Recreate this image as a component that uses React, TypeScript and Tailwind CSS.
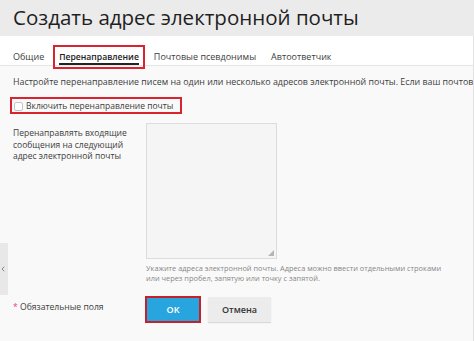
import { ChevronLeft } from 'lucide-react';

const tabs = ['Общие', 'Перенаправление', 'Почтовые псевдонимы', 'Автоответчик'];

export default function App() {
  return (
    <div className="w-[474px] h-[341px] overflow-hidden bg-[#f9f9f9] text-[#3d3d3d] font-['Open_Sans',sans-serif] relative">
      {/* ── Title band ─────────────────────────────── */}
      <div className="h-[36px] bg-[#ebebeb] pl-[13px] flex items-center">
        <h1 className="text-[20.5px] leading-none text-[#1f1f1f] whitespace-nowrap -mt-[2px]">
          Создать адрес электронной почты
        </h1>
      </div>

      {/* ── Tabs ───────────────────────────────────── */}
      <div className="h-[30px] bg-white border-b border-[#e6e6e6] flex items-end pl-[13px] gap-[15px] text-[9px] mr-[1px]">
        {tabs.map((t, i) =>
          i === 1 ? (
            <div key={t} className="relative h-full flex items-end">
              <span className="border-b-2 border-[#222] font-semibold text-[8.6px] text-[#222] leading-[12px] whitespace-nowrap">{t}</span>
              {/* red highlight */}
              <div className="absolute -left-[6px] -right-[6px] top-[9px] -bottom-[4px] border-2 border-[#d9232e]" />
            </div>
          ) : (
            <span key={t} className="pb-[2px] leading-[12px] whitespace-nowrap">{t}</span>
          )
        )}
      </div>

      {/* ── Body ───────────────────────────────────── */}
      <div className="pl-[13px] pt-[10px]">
        <p className="whitespace-nowrap text-[8.85px] leading-[12px]">
          Настройте перенаправление писем на один или несколько адресов электронной почты. Если ваш почтовый ящик
        </p>

        <div className="relative mt-[12px] flex items-center gap-[3px] h-[12px] text-[8.5px]">
          <span className="ml-[1px] w-[9px] h-[9px] border border-[#c4c4c4] rounded-[2px] bg-white" />
          <span className="leading-[12px] whitespace-nowrap">Включить перенаправление почты</span>
          <div className="absolute -left-[3px] -top-[3px] w-[172px] h-[17px] border-2 border-[#d9232e]" />
        </div>

        <div className="mt-[11px] grid grid-cols-[133px_1fr]">
          <div className="pt-[4px] pr-[6px] text-[8.5px] leading-[11.5px]">
            Перенаправлять входящие сообщения на следующий адрес электронной почты
          </div>
          <div>
            <div className="relative w-[131px] h-[136px] border border-[#dcdcdc] bg-[#f5f5f5]">
              <svg className="absolute right-[2px] bottom-[2px]" width="6" height="6" viewBox="0 0 6 6">
                <path d="M6 0 L6 6 L0 6 Z" fill="#b5b5b5" />
              </svg>
            </div>
            <p className="mt-[4px] text-[7.4px] leading-[10px] text-[#888] whitespace-nowrap">
              Укажите адреса электронной почты. Адреса можно ввести отдельными строками
              <br />
              или через пробел, запятую или точку с запятой.
            </p>
          </div>
        </div>

        <div className="mt-[14px] grid grid-cols-[133px_1fr] items-center">
          <div className="text-[8.6px] -mt-[4px]">
            <span className="text-[#e0457b]">*</span> Обязательные поля
          </div>
          <div className="flex gap-[8px]">
            <button className="relative w-[54px] h-[25px] bg-[#28a5de] text-white font-semibold text-[9px]">
              OK
              <span className="absolute -inset-[1px] border-2 border-[#c8202b]" />
            </button>
            <button className="w-[63px] h-[25px] bg-[#ececec] text-[#333] font-semibold text-[9px] shadow-[0_1px_1px_rgba(0,0,0,0.12)]">
              Отмена
            </button>
          </div>
        </div>
      </div>

      {/* ── Side collapse handle ───────────────────── */}
      <div className="absolute left-0 top-[243px] w-[8px] h-[52px] bg-[#e8e8e8] flex items-center justify-center">
        <ChevronLeft size={8} strokeWidth={2} className="text-[#555] -ml-[2px]" />
      </div>

      {/* right edge */}
      <div className="absolute right-0 top-[36px] bottom-0 w-[1px] bg-[#e2e2e2]" />
    </div>
  );
}
